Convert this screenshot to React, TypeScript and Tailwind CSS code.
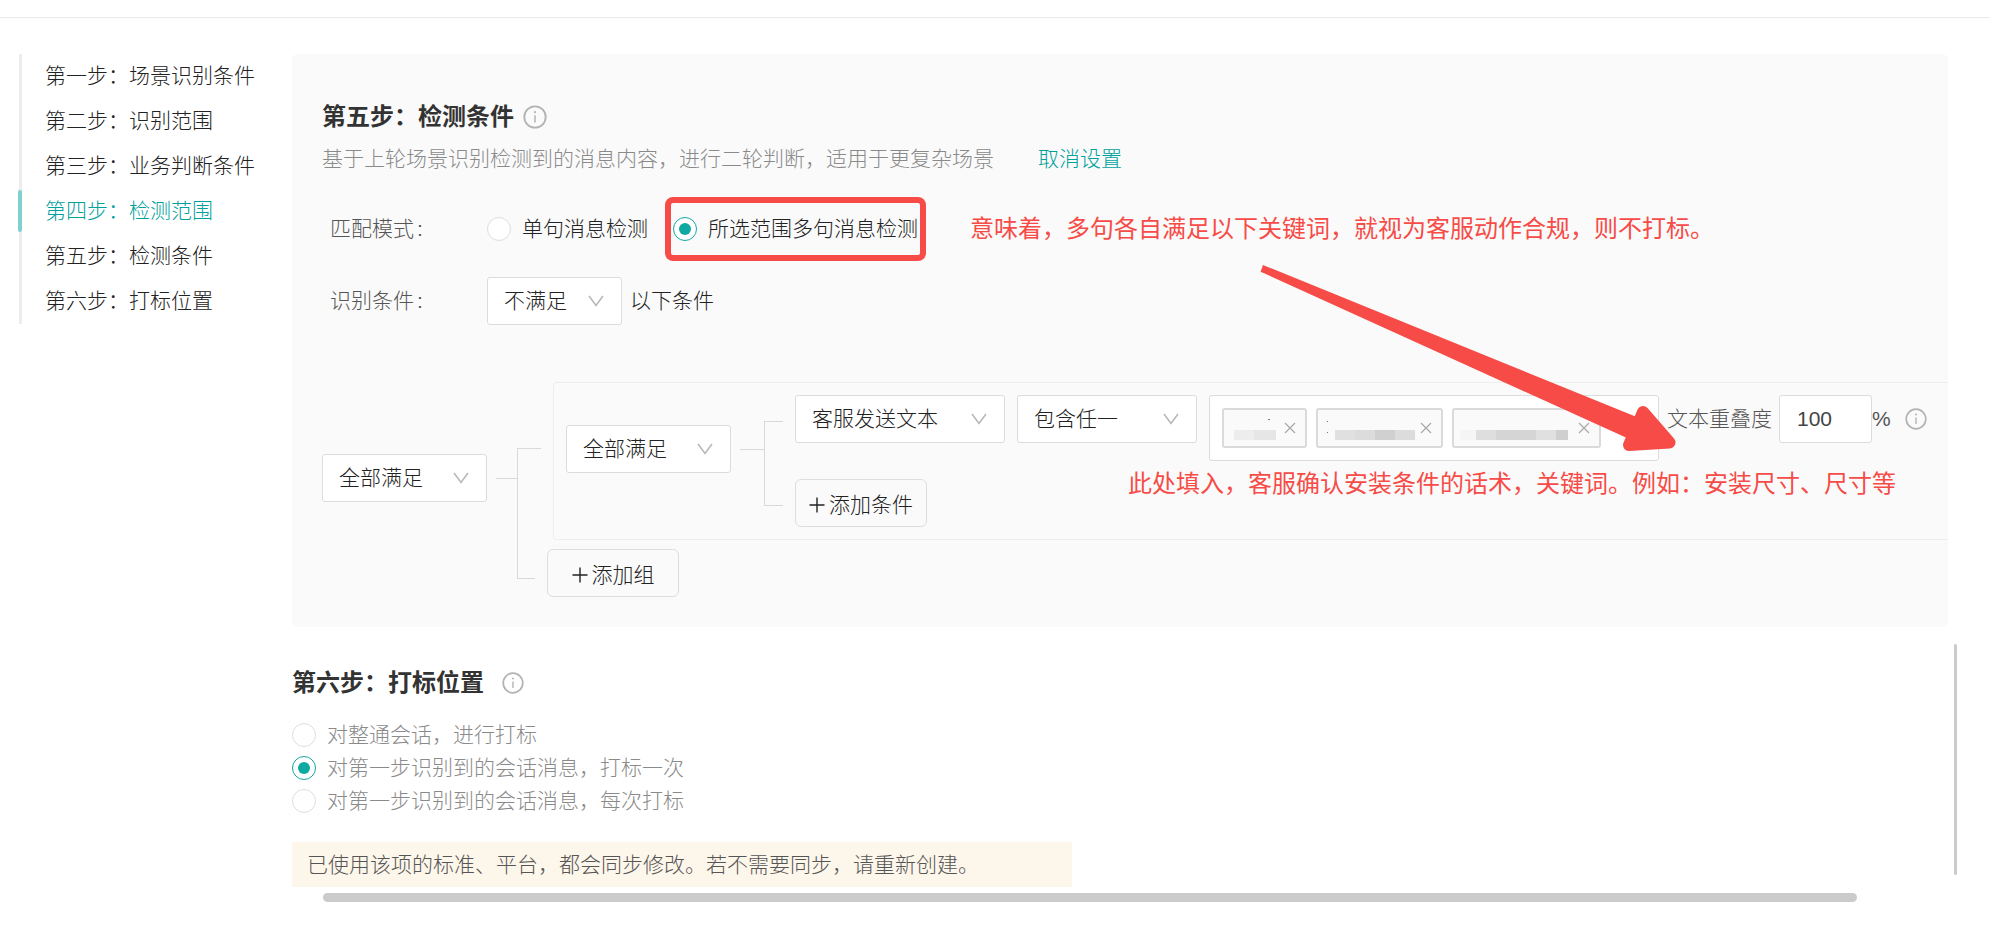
import React, { useState } from 'react';
import clsx from 'clsx';

const steps = [
  '第一步：场景识别条件',
  '第二步：识别范围',
  '第三步：业务判断条件',
  '第四步：检测范围',
  '第五步：检测条件',
  '第六步：打标位置'
];

const positions = [
  { value: 'session', label: '对整通会话，进行打标' },
  { value: 'once', label: '对第一步识别到的会话消息，打标一次' },
  { value: 'every', label: '对第一步识别到的会话消息，每次打标' }
];

const InfoIcon = ({ className }: { className?: string }) => (
  <svg viewBox="0 0 22 22" className={clsx('shrink-0 text-[#b3b3b3]', className)} fill="none" stroke="currentColor">
    <circle cx="11" cy="11" r="9.8" strokeWidth="1.7" />
    <path d="M11 9.5v6.5" strokeWidth="1.4" />
    <circle cx="11" cy="6.6" r="1" fill="currentColor" stroke="none" />
  </svg>
);

const PlusIcon = () => (
  <svg viewBox="0 0 16 16" className="size-4 shrink-0" fill="none" stroke="currentColor" strokeWidth="1.4">
    <path d="M8 0.5v15M0.5 8h15" />
  </svg>
);

interface SelectProps {
  label: string;
  options: string[];
  className?: string;
}

const Select: React.FC<SelectProps> = ({ label, options, className }) => (
  <div className={clsx('relative shrink-0', className)}>
    <select
      aria-label={label}
      className="h-12 w-full appearance-none rounded-[3px] border border-[#dcdcdc] bg-white pl-4 pr-10 text-[#222]"
    >
      {options.map(option => (
        <option key={option}>{option}</option>
      ))}
    </select>
    <svg
      viewBox="0 0 16 12"
      className="pointer-events-none absolute right-[18px] top-[18px] h-3 w-4"
      fill="none"
      stroke="#b8b8b8"
      strokeWidth="1.6"
    >
      <path d="M1 1l7 9.5L15 1" />
    </svg>
  </div>
);

interface RadioProps {
  name: string;
  label: string;
  checked: boolean;
  onChange: () => void;
  className?: string;
}

const Radio: React.FC<RadioProps> = ({ name, label, checked, onChange, className }) => (
  <label className={clsx('flex shrink-0 items-center gap-[11px] whitespace-nowrap', className)}>
    <input
      type="radio"
      name={name}
      checked={checked}
      onChange={onChange}
      className="grid size-6 shrink-0 appearance-none place-items-center rounded-full border border-[#dedede] bg-white before:size-3 before:rounded-full checked:border-[#0fa8a3] checked:before:bg-[#0fa8a3]"
    />
    {label}
  </label>
);

interface TagProps {
  name: string;
  children: React.ReactNode;
  className?: string;
}

const Tag: React.FC<TagProps> = ({ name, children, className }) => (
  <span
    className={clsx(
      'relative flex h-10 shrink-0 items-center justify-between rounded-[3px] border-2 border-[#dadada] bg-[#fafafa] pr-[9px]',
      className
    )}
  >
    <span className="mt-3.5 flex h-2.5">{children}</span>
    <button type="button" aria-label={`移除${name}`}>
      <svg viewBox="0 0 12 12" className="size-3" fill="none" stroke="#a8a8a8" strokeWidth="1.2">
        <path d="M1 1l10 10M11 1L1 11" />
      </svg>
    </button>
  </span>
);

const AddButton = ({ label }: { label: string }) => (
  <button
    type="button"
    className="flex h-12 w-[132px] items-center justify-center gap-1 rounded-md border border-[#dedede] pt-[3px] text-[#222]"
  >
    <PlusIcon />
    {label}
  </button>
);

export default function App() {
  const [activeStep] = useState(3);
  const [mode, setMode] = useState('multi');
  const [position, setPosition] = useState('once');
  const [overlap, setOverlap] = useState('100');

  return (
    <div className="relative min-h-screen overflow-hidden bg-white font-['Liberation_Sans','Noto_Sans_CJK_SC',sans-serif] text-[21px] font-light leading-8 text-[#222]">
      <header className="h-[18px] border-b border-[#ebebeb]" />

      <div className="flex pt-9 pr-[42px] pl-[19px]">
        <nav className="w-[273px] shrink-0">
          <ul className="border-l-3 border-[#ededed]">
            {steps.map((step, index) => (
              <li key={step} className="relative flex h-[45px] items-start pt-1.5 pl-[23px]">
                {index === activeStep && (
                  <span className="absolute -left-1 top-px h-[42px] w-1 rounded-sm bg-[#7fd1cd]" />
                )}
                <a href="#" className={clsx(index === activeStep && 'text-[#00a09b]')}>
                  {step}
                </a>
              </li>
            ))}
          </ul>
        </nav>

        <main className="min-w-0 flex-1">
          {/* 第五步 */}
          <section className="relative rounded-md bg-[#fafafa] pt-[46px] pb-[30px] pl-[30px]">
            <div className="flex items-center gap-[9px]">
              <h2 className="pt-px text-2xl font-bold leading-8 text-[#333]">第五步：检测条件</h2>
              <InfoIcon className="size-6" />
            </div>
            <div className="mt-2.5 flex gap-11 text-[#8a8a8a]">
              <p>基于上轮场景识别检测到的消息内容，进行二轮判断，适用于更复杂场景</p>
              <a href="#" className="text-[#00a09b]">取消设置</a>
            </div>

            <div className="mt-[30px] flex h-12 items-center">
              <span className="w-[165px] shrink-0 pl-2 text-[#555]">
                匹配模式<span className="ml-[3px]">:</span>
              </span>
              <Radio
                name="mode"
                label="单句消息检测"
                checked={mode === 'single'}
                onChange={() => setMode('single')}
              />
              <div className="relative ml-[25px]">
                <Radio
                  name="mode"
                  label="所选范围多句消息检测"
                  checked={mode === 'multi'}
                  onChange={() => setMode('multi')}
                />
                <span className="pointer-events-none absolute -inset-x-2 -inset-y-4 rounded-lg border-6 border-[#f74b47]" />
              </div>
              <p className="ml-[52px] whitespace-nowrap text-2xl font-normal leading-8 text-[#f74b47]">
                意味着，多句各自满足以下关键词，就视为客服动作合规，则不打标。
              </p>
            </div>

            <div className="mt-6 flex h-12 items-center">
              <span className="w-[165px] shrink-0 pl-2 text-[#555]">
                识别条件<span className="ml-[3px]">:</span>
              </span>
              <Select label="识别条件" options={['不满足', '满足']} className="mr-2 w-[135px]" />
              以下条件
            </div>

            {/* 条件树 */}
            <div className="mt-[57px] flex">
              <Select label="组关系" options={['全部满足', '任一满足']} className="mt-[72px] w-[165px]" />
              <span className="mt-24 ml-[9px] h-px w-[21px] shrink-0 bg-[#d9d9d9]" />
              <span className="mt-[66px] mr-1.5 flex h-[131px] w-6 shrink-0 flex-col justify-between border-l border-[#d9d9d9]">
                <span className="h-px bg-[#d9d9d9]" />
                <span className="mr-1.5 h-px bg-[#d9d9d9]" />
              </span>

              <div className="min-w-0 flex-1">
                <div className="ml-1.5 flex rounded-l-[4px] border border-r-0 border-[#eee] py-3 pl-3">
                  <Select label="条件关系" options={['全部满足', '任一满足']} className="mt-[30px] w-[165px]" />
                  <span className="mt-[54px] ml-[9px] h-px w-6 shrink-0 bg-[#d9d9d9]" />
                  <span className="mt-[26px] mr-3 h-[85px] w-[19px] shrink-0 border-y border-l border-[#d9d9d9]" />

                  <div>
                    <div className="flex items-start">
                      <Select label="消息类型" options={['客服发送文本', '客户发送文本']} className="mr-3 w-[210px]" />
                      <Select label="匹配方式" options={['包含任一', '包含全部']} className="mr-3 w-[180px]" />
                      <div className="flex h-[66px] w-[450px] shrink-0 gap-[9px] rounded-[3px] border border-[#dcdcdc] bg-white p-3">
                        <Tag name="关键词一" className="w-[85px] pl-2.5">
                          <span className="absolute top-[9px] left-11 h-px w-0.5 bg-[#777]" />
                          <span className="w-5 bg-[#ededed]" />
                          <span className="w-[22px] bg-[#e6e6e6]" />
                        </Tag>
                        <Tag name="关键词二" className="w-[127px] pl-[17px]">
                          <span className="absolute top-[11px] left-[9px] h-3 w-px border-y border-[#777]" />
                          <span className="w-5 bg-[#e0e0e0]" />
                          <span className="w-5 bg-[#dcdcdc]" />
                          <span className="w-5 bg-[#d0d0d0]" />
                          <span className="w-5 bg-[#dcdcdc]" />
                        </Tag>
                        <Tag name="关键词三" className="w-[149px] pl-1.5">
                          <span className="w-4 bg-[#f5f5f5]" />
                          <span className="w-5 bg-[#dedede]" />
                          <span className="w-10 bg-[#d5d5d5]" />
                          <span className="w-5 bg-[#e0e0e0]" />
                          <span className="w-3 bg-[#cfcfcf]" />
                        </Tag>
                      </div>
                      <div className="ml-2 flex h-12 shrink-0 items-center whitespace-nowrap">
                        <label htmlFor="overlap" className="mr-[7px] text-[#555]">文本重叠度</label>
                        <input
                          id="overlap"
                          type="text"
                          value={overlap}
                          onChange={e => setOverlap(e.target.value)}
                          className="h-12 w-[93px] rounded-[3px] border border-[#dcdcdc] bg-white pl-[17px] text-[#444]"
                        />
                        <span className="mr-3.5 text-[#555]">%</span>
                        <InfoIcon className="size-[22px]" />
                      </div>
                    </div>
                    <div className="mt-[18px]">
                      <AddButton label="添加条件" />
                    </div>
                  </div>
                </div>
                <div className="mt-[9px]">
                  <AddButton label="添加组" />
                </div>
              </div>
            </div>

            {/* 标注 */}
            <svg
              viewBox="0 0 420 190"
              className="pointer-events-none absolute top-[208px] left-[967px] h-[190px] w-[420px]"
              fill="#f74b47"
            >
              <path d="M4 3L376.500 154.500 368 176 1.600 9.700z" />
              <path d="M384 150L410.500 180.500 370 183z" stroke="#f74b47" strokeWidth="12" strokeLinejoin="round" />
            </svg>
            <p className="absolute top-[414px] left-[836px] whitespace-nowrap text-2xl font-normal leading-8 text-[#f74b47]">
              此处填入，客服确认安装条件的话术，关键词。例如：安装尺寸、尺寸等
            </p>
          </section>

          {/* 第六步 */}
          <section className="pt-10">
            <div className="flex items-center gap-[18px]">
              <h2 className="text-2xl font-bold leading-8 text-[#333]">第六步：打标位置</h2>
              <InfoIcon className="size-[22px]" />
            </div>
            <div className="mt-[19px] text-[#8a8a8a]">
              {positions.map(item => (
                <Radio
                  key={item.value}
                  name="position"
                  label={item.label}
                  checked={position === item.value}
                  onChange={() => setPosition(item.value)}
                  className="h-[33px]"
                />
              ))}
            </div>
            <p className="mt-[25px] flex h-[45px] max-w-[780px] items-center bg-[#fdf6eb] pl-[15px] text-[#555]">
              已使用该项的标准、平台，都会同步修改。若不需要同步，请重新创建。
            </p>
            <div className="mt-1.5 mr-[91px] ml-[31px] h-[9px] rounded-full bg-[#cbcbcb]" />
          </section>
        </main>
      </div>

      <div className="absolute top-[644px] right-[33px] h-[231px] w-[3px] rounded-full bg-[#cbcbcb]" />
    </div>
  );
}
